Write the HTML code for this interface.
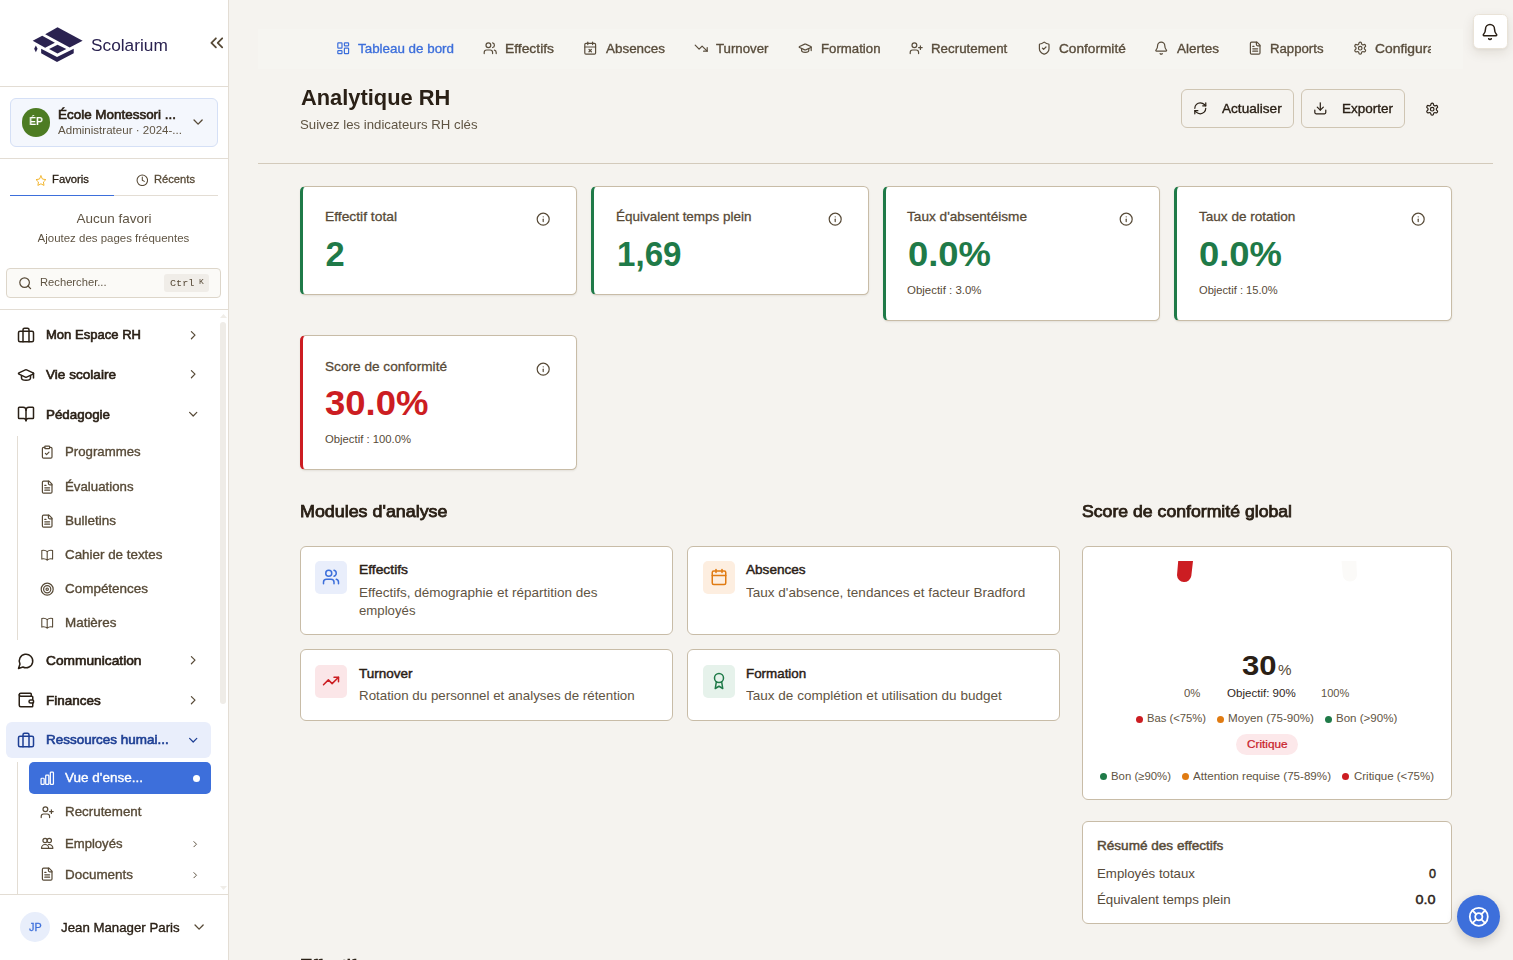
<!DOCTYPE html>
<html lang="fr"><head><meta charset="utf-8"><title>Analytique RH</title><style>
html,body{margin:0;padding:0}
body{width:1513px;height:960px;overflow:hidden;position:relative;background:#f5f3ef;font-family:"Liberation Sans", sans-serif;}
body div,body svg,body span.t{position:absolute;box-sizing:border-box}
span.t{white-space:nowrap;transform-origin:0 0;}
span.g{will-change:transform;}
</style></head><body>
<aside>
<div style="left:0px;top:0px;width:229px;height:960px;background:#fff;border-right:1px solid #e3ddd4;"></div>
<svg style="left:20px;top:15px" width="160" height="60" viewBox="0 0 1513 567"><g fill="#2a2250"><polygon points="238,183 355,115 592,243 470,308"/><polygon points="120,243 210,197 330,262 238,310"/><polygon points="275,322 355,280 438,322 355,365"/><polygon points="200,318 350,397 508,318 508,362 350,445 200,362"/><polygon points="150,288 166,320 150,352 134,320"/></g></svg>
<span class="t g" style='left:91.00px;top:35px;font-size:16.8px;line-height:21px;font-weight:400;color:#2a2250;transform:scaleX(1.0294);'>Scolarium</span>
<svg style="left:205.70px;top:32.40px" width="21.6" height="21.6" viewBox="0 0 24 24" fill="none" stroke="#574a37" stroke-width="2" stroke-linecap="round" stroke-linejoin="round"><path d="m11 17-5-5 5-5"/><path d="m18 17-5-5 5-5"/></svg>
<div style="left:0px;top:86px;width:228px;height:1px;background:#e3ddd4;"></div>
<div style="left:10px;top:98px;width:208px;height:49px;background:#f4f7fd;border:1px solid #d5e0f6;border-radius:6px;"></div>
<div style="left:21.7px;top:108px;width:28.8px;height:28.8px;background:#4d7c23;border-radius:50%;"></div>
<span class="t g" style='left:29.03px;top:114px;font-size:10.6px;line-height:14px;font-weight:700;color:#fff;transform:scaleX(0.9618);transform-origin:50% 0;'>ÉP</span>
<span class="t g" style='left:57.70px;top:107px;font-size:12.6px;line-height:16px;font-weight:400;color:#2a2016;-webkit-text-stroke:0.58px;transform:scaleX(1.0670);'>École Montessori ...</span>
<span class="t g" style='left:57.70px;top:123px;font-size:10.8px;line-height:14px;font-weight:400;color:#5f5443;transform:scaleX(1.0706);'>Administrateur · 2024-...</span>
<svg style="left:190.10px;top:114.40px" width="16.2" height="16.2" viewBox="0 0 24 24" fill="none" stroke="#574a37" stroke-width="2" stroke-linecap="round" stroke-linejoin="round"><path d="m6 9 6 6 6-6"/></svg>
<div style="left:0px;top:158px;width:228px;height:1px;background:#e3ddd4;"></div>
<div style="left:10px;top:195px;width:208px;height:1px;background:#e3ddd4;"></div>
<div style="left:10px;top:194.5px;width:104px;height:1.5px;background:#3d6fdb;"></div>
<svg style="left:34.65px;top:174.55px" width="11.9" height="11.9" viewBox="0 0 24 24" fill="none" stroke="#f2b530" stroke-width="2" stroke-linecap="round" stroke-linejoin="round"><polygon points="12 2 15.09 8.26 22 9.27 17 14.14 18.18 21.02 12 17.77 5.82 21.02 7 14.14 2 9.27 8.91 8.26 12 2"/></svg>
<span class="t g" style='left:52.30px;top:172px;font-size:10.8px;line-height:14px;font-weight:400;color:#2a2016;-webkit-text-stroke:0.29px;transform:scaleX(1.0450);'>Favoris</span>
<svg style="left:135.90px;top:173.90px" width="12.6" height="12.6" viewBox="0 0 24 24" fill="none" stroke="#574a37" stroke-width="2" stroke-linecap="round" stroke-linejoin="round"><circle cx="12" cy="12" r="10"/><polyline points="12 6 12 12 16 14"/></svg>
<span class="t g" style='left:154.00px;top:172px;font-size:10.8px;line-height:14px;font-weight:400;color:#574a37;-webkit-text-stroke:0.29px;transform:scaleX(1.0351);'>Récents</span>
<span class="t g" style='left:78.79px;top:211px;font-size:12.6px;line-height:16px;font-weight:400;color:#5f5443;transform:scaleX(1.0712);transform-origin:50% 0;'>Aucun favori</span>
<span class="t g" style='left:42.37px;top:231px;font-size:10.8px;line-height:14px;font-weight:400;color:#5f5443;transform:scaleX(1.0619);transform-origin:50% 0;'>Ajoutez des pages fréquentes</span>
<div style="left:6px;top:268px;width:215px;height:29.5px;background:#fbfaf7;border:1px solid #ddd6ca;border-radius:4px;"></div>
<svg style="left:17.80px;top:276.00px" width="14.4" height="14.4" viewBox="0 0 24 24" fill="none" stroke="#574a37" stroke-width="2" stroke-linecap="round" stroke-linejoin="round"><circle cx="11" cy="11" r="8"/><path d="m21 21-4.3-4.3"/></svg>
<span class="t g" style='left:39.70px;top:275px;font-size:10.8px;line-height:14px;font-weight:400;color:#5f5443;transform:scaleX(1.0371);'>Rechercher...</span>
<div style="left:164px;top:274px;width:44.7px;height:17.7px;background:#f0ede8;border-radius:3px;"></div>
<span class="t g" style='left:169.50px;top:277px;font-size:9.9px;line-height:13px;font-weight:400;color:#574a37;font-family:"Liberation Mono", monospace;transform:scaleX(1.0329);'>Ctrl</span>
<span class="t g" style='left:198.70px;top:276px;font-size:8px;line-height:11px;font-weight:400;color:#574a37;font-family:"Liberation Mono", monospace;'>K</span>
<div style="left:0px;top:309px;width:228px;height:1px;background:#e3ddd4;"></div>
<div style="left:220.3px;top:321.5px;width:5.5px;height:382.5px;background:#efece7;border-radius:3px;"></div>
<svg style="left:219.5px;top:314px" width="7" height="4" viewBox="0 0 7 4"><path d="M0 4 3.5 0 7 4z" fill="#f0ede8"/></svg>
<svg style="left:219.5px;top:886px" width="7" height="4" viewBox="0 0 7 4"><path d="M0 0 3.5 4 7 0z" fill="#f0ede8"/></svg>
<svg style="left:17.00px;top:325.80px" width="18" height="18" viewBox="0 0 24 24" fill="none" stroke="#2a2016" stroke-width="2" stroke-linecap="round" stroke-linejoin="round"><rect width="20" height="14" x="2" y="7" rx="2" ry="2"/><path d="M16 21V5a2 2 0 0 0-2-2h-4a2 2 0 0 0-2 2v16"/></svg>
<span class="t g" style='left:46.00px;top:327px;font-size:12.6px;line-height:16px;font-weight:400;color:#2a2016;-webkit-text-stroke:0.58px;transform:scaleX(1.0360);'>Mon Espace RH</span>
<svg style="left:185.80px;top:327.60px" width="14.4" height="14.4" viewBox="0 0 24 24" fill="none" stroke="#574a37" stroke-width="2" stroke-linecap="round" stroke-linejoin="round"><path d="m9 18 6-6-6-6"/></svg>
<svg style="left:17.00px;top:365.60px" width="18" height="18" viewBox="0 0 24 24" fill="none" stroke="#2a2016" stroke-width="2" stroke-linecap="round" stroke-linejoin="round"><path d="M21.42 10.922a1 1 0 0 0-.019-1.838L12.83 5.18a2 2 0 0 0-1.66 0L2.6 9.08a1 1 0 0 0 0 1.832l8.57 3.908a2 2 0 0 0 1.66 0z"/><path d="M22 10v6"/><path d="M6 12.5V16a6 3 0 0 0 12 0v-3.5"/></svg>
<span class="t g" style='left:46.00px;top:367px;font-size:12.6px;line-height:16px;font-weight:400;color:#2a2016;-webkit-text-stroke:0.58px;transform:scaleX(1.0790);'>Vie scolaire</span>
<svg style="left:185.80px;top:367.40px" width="14.4" height="14.4" viewBox="0 0 24 24" fill="none" stroke="#574a37" stroke-width="2" stroke-linecap="round" stroke-linejoin="round"><path d="m9 18 6-6-6-6"/></svg>
<svg style="left:17.00px;top:405.40px" width="18" height="18" viewBox="0 0 24 24" fill="none" stroke="#2a2016" stroke-width="2" stroke-linecap="round" stroke-linejoin="round"><path d="M12 7v14"/><path d="M3 18a1 1 0 0 1-1-1V4a1 1 0 0 1 1-1h5a4 4 0 0 1 4 4 4 4 0 0 1 4-4h5a1 1 0 0 1 1 1v13a1 1 0 0 1-1 1h-6a3 3 0 0 0-3 3 3 3 0 0 0-3-3z"/></svg>
<span class="t g" style='left:46.00px;top:407px;font-size:12.6px;line-height:16px;font-weight:400;color:#2a2016;-webkit-text-stroke:0.58px;transform:scaleX(1.0625);'>Pédagogie</span>
<svg style="left:185.80px;top:407.20px" width="14.4" height="14.4" viewBox="0 0 24 24" fill="none" stroke="#574a37" stroke-width="2" stroke-linecap="round" stroke-linejoin="round"><path d="m6 9 6 6 6-6"/></svg>
<div style="left:17px;top:436px;width:1px;height:204px;background:#e3ddd4;"></div>
<svg style="left:40.00px;top:445.00px" width="14.4" height="14.4" viewBox="0 0 24 24" fill="none" stroke="#574a37" stroke-width="2" stroke-linecap="round" stroke-linejoin="round"><rect width="8" height="4" x="8" y="2" rx="1" ry="1"/><path d="M16 4h2a2 2 0 0 1 2 2v14a2 2 0 0 1-2 2H6a2 2 0 0 1-2-2V6a2 2 0 0 1 2-2h2"/><path d="m9 14 2 2 4-4"/></svg>
<span class="t g" style='left:65.30px;top:444px;font-size:12.6px;line-height:16px;font-weight:400;color:#574a37;-webkit-text-stroke:0.34px;transform:scaleX(1.0500);'>Programmes</span>
<svg style="left:40.00px;top:479.70px" width="14.4" height="14.4" viewBox="0 0 24 24" fill="none" stroke="#574a37" stroke-width="2" stroke-linecap="round" stroke-linejoin="round"><path d="M15 2H6a2 2 0 0 0-2 2v16a2 2 0 0 0 2 2h12a2 2 0 0 0 2-2V7Z"/><path d="M14 2v4a2 2 0 0 0 2 2h4"/><path d="M10 9H8"/><path d="M16 13H8"/><path d="M16 17H8"/></svg>
<span class="t g" style='left:65.30px;top:479px;font-size:12.6px;line-height:16px;font-weight:400;color:#574a37;-webkit-text-stroke:0.34px;transform:scaleX(1.0521);'>Évaluations</span>
<svg style="left:40.00px;top:513.70px" width="14.4" height="14.4" viewBox="0 0 24 24" fill="none" stroke="#574a37" stroke-width="2" stroke-linecap="round" stroke-linejoin="round"><path d="M15 2H6a2 2 0 0 0-2 2v16a2 2 0 0 0 2 2h12a2 2 0 0 0 2-2V7Z"/><path d="M14 2v4a2 2 0 0 0 2 2h4"/><path d="M10 9H8"/><path d="M16 13H8"/><path d="M16 17H8"/></svg>
<span class="t g" style='left:65.30px;top:513px;font-size:12.6px;line-height:16px;font-weight:400;color:#574a37;-webkit-text-stroke:0.34px;transform:scaleX(1.0712);'>Bulletins</span>
<svg style="left:40.00px;top:547.70px" width="14.4" height="14.4" viewBox="0 0 24 24" fill="none" stroke="#574a37" stroke-width="2" stroke-linecap="round" stroke-linejoin="round"><path stroke-width="1.8" d="M12 6.042A8.967 8.967 0 0 0 6 3.75c-1.052 0-2.062.18-3 .512v14.25A8.987 8.987 0 0 1 6 18c2.305 0 4.408.867 6 2.292m0-14.25a8.966 8.966 0 0 1 6-2.292c1.052 0 2.062.18 3 .512v14.25A8.987 8.987 0 0 0 18 18a8.967 8.967 0 0 0-6 2.292m0-14.25v14.25"/></svg>
<span class="t g" style='left:65.30px;top:547px;font-size:12.6px;line-height:16px;font-weight:400;color:#574a37;-webkit-text-stroke:0.34px;transform:scaleX(1.0630);'>Cahier de textes</span>
<svg style="left:40.00px;top:581.70px" width="14.4" height="14.4" viewBox="0 0 24 24" fill="none" stroke="#574a37" stroke-width="2" stroke-linecap="round" stroke-linejoin="round"><circle cx="12" cy="12" r="10"/><circle cx="12" cy="12" r="6"/><circle cx="12" cy="12" r="2"/></svg>
<span class="t g" style='left:65.30px;top:581px;font-size:12.6px;line-height:16px;font-weight:400;color:#574a37;-webkit-text-stroke:0.34px;transform:scaleX(1.0682);'>Compétences</span>
<svg style="left:40.00px;top:615.70px" width="14.4" height="14.4" viewBox="0 0 24 24" fill="none" stroke="#574a37" stroke-width="2" stroke-linecap="round" stroke-linejoin="round"><path stroke-width="1.8" d="M12 6.042A8.967 8.967 0 0 0 6 3.75c-1.052 0-2.062.18-3 .512v14.25A8.987 8.987 0 0 1 6 18c2.305 0 4.408.867 6 2.292m0-14.25a8.966 8.966 0 0 1 6-2.292c1.052 0 2.062.18 3 .512v14.25A8.987 8.987 0 0 0 18 18a8.967 8.967 0 0 0-6 2.292m0-14.25v14.25"/></svg>
<span class="t g" style='left:65.30px;top:615px;font-size:12.6px;line-height:16px;font-weight:400;color:#574a37;-webkit-text-stroke:0.34px;transform:scaleX(1.0663);'>Matières</span>
<svg style="left:17.00px;top:651.60px" width="18" height="18" viewBox="0 0 24 24" fill="none" stroke="#2a2016" stroke-width="2" stroke-linecap="round" stroke-linejoin="round"><path d="M7.9 20A9 9 0 1 0 4 16.1L2 22Z"/></svg>
<span class="t g" style='left:46.00px;top:653px;font-size:12.6px;line-height:16px;font-weight:400;color:#2a2016;-webkit-text-stroke:0.58px;transform:scaleX(1.0914);'>Communication</span>
<svg style="left:185.80px;top:653.40px" width="14.4" height="14.4" viewBox="0 0 24 24" fill="none" stroke="#574a37" stroke-width="2" stroke-linecap="round" stroke-linejoin="round"><path d="m9 18 6-6-6-6"/></svg>
<svg style="left:17.00px;top:691.30px" width="18" height="18" viewBox="0 0 24 24" fill="none" stroke="#2a2016" stroke-width="2" stroke-linecap="round" stroke-linejoin="round"><path d="M19 7V4a1 1 0 0 0-1-1H5a2 2 0 0 0 0 4h15a1 1 0 0 1 1 1v4h-3a2 2 0 0 0 0 4h3a1 1 0 0 0 1-1v-2a1 1 0 0 0-1-1"/><path d="M3 5v14a2 2 0 0 0 2 2h15a1 1 0 0 0 1-1v-4"/></svg>
<span class="t g" style='left:46.00px;top:693px;font-size:12.6px;line-height:16px;font-weight:400;color:#2a2016;-webkit-text-stroke:0.58px;transform:scaleX(1.0703);'>Finances</span>
<svg style="left:185.80px;top:693.10px" width="14.4" height="14.4" viewBox="0 0 24 24" fill="none" stroke="#574a37" stroke-width="2" stroke-linecap="round" stroke-linejoin="round"><path d="m9 18 6-6-6-6"/></svg>
<div style="left:6px;top:722px;width:205px;height:36px;background:#e9eefb;border-radius:6px;"></div>
<svg style="left:17.00px;top:730.80px" width="18" height="18" viewBox="0 0 24 24" fill="none" stroke="#1e3f94" stroke-width="2" stroke-linecap="round" stroke-linejoin="round"><rect width="20" height="14" x="2" y="7" rx="2" ry="2"/><path d="M16 21V5a2 2 0 0 0-2-2h-4a2 2 0 0 0-2 2v16"/></svg>
<span class="t g" style='left:46.00px;top:732px;font-size:12.6px;line-height:16px;font-weight:400;color:#1e3f94;-webkit-text-stroke:0.58px;transform:scaleX(1.0688);'>Ressources humai...</span>
<svg style="left:185.80px;top:732.60px" width="14.4" height="14.4" viewBox="0 0 24 24" fill="none" stroke="#1e3f94" stroke-width="2" stroke-linecap="round" stroke-linejoin="round"><path d="m6 9 6 6 6-6"/></svg>
<div style="left:17px;top:762px;width:1px;height:132px;background:#e3ddd4;"></div>
<div style="left:29px;top:762px;width:182px;height:31.7px;background:#3d6fdb;border-radius:5px;"></div>
<svg style="left:39.05px;top:769.95px" width="16.5" height="16.5" viewBox="0 0 24 24" fill="none" stroke="#fff" stroke-width="1.8" stroke-linecap="round" stroke-linejoin="round"><path d="M3 13.125C3 12.504 3.504 12 4.125 12h2.25c.621 0 1.125.504 1.125 1.125v6.75C7.5 20.496 6.996 21 6.375 21h-2.25A1.125 1.125 0 0 1 3 19.875v-6.75ZM9.75 8.625c0-.621.504-1.125 1.125-1.125h2.25c.621 0 1.125.504 1.125 1.125v11.25c0 .621-.504 1.125-1.125 1.125h-2.25a1.125 1.125 0 0 1-1.125-1.125V8.625ZM16.5 4.125c0-.621.504-1.125 1.125-1.125h2.25C20.496 3 21 3.504 21 4.125v15.75c0 .621-.504 1.125-1.125 1.125h-2.25a1.125 1.125 0 0 1-1.125-1.125V4.125Z"/></svg>
<span class="t g" style='left:65.30px;top:770px;font-size:12.6px;line-height:16px;font-weight:400;color:#fff;-webkit-text-stroke:0.34px;transform:scaleX(1.0735);'>Vue d&#x27;ense...</span>
<div style="left:192.8px;top:774.5px;width:7px;height:7px;background:#fff;border-radius:50%;"></div>
<svg style="left:40.00px;top:804.50px" width="14.4" height="14.4" viewBox="0 0 24 24" fill="none" stroke="#574a37" stroke-width="2" stroke-linecap="round" stroke-linejoin="round"><path d="M16 21v-2a4 4 0 0 0-4-4H6a4 4 0 0 0-4 4v2"/><circle cx="9" cy="7" r="4"/><line x1="19" x2="19" y1="8" y2="14"/><line x1="22" x2="16" y1="11" y2="11"/></svg>
<span class="t g" style='left:65.30px;top:804px;font-size:12.6px;line-height:16px;font-weight:400;color:#574a37;-webkit-text-stroke:0.34px;transform:scaleX(1.0609);'>Recrutement</span>
<svg style="left:40.00px;top:836.20px" width="14.4" height="14.4" viewBox="0 0 24 24" fill="none" stroke="#574a37" stroke-width="2" stroke-linecap="round" stroke-linejoin="round"><circle cx="8.5" cy="7.5" r="3.6"/><circle cx="15.5" cy="7.5" r="3.6"/><path d="M2.5 20.5a6 6.3 0 0 1 12 0z"/><path d="M14.3 14.3a6 6.3 0 0 1 7.2 6.2h-6"/></svg>
<span class="t g" style='left:65.30px;top:836px;font-size:12.6px;line-height:16px;font-weight:400;color:#574a37;-webkit-text-stroke:0.34px;transform:scaleX(1.0398);'>Employés</span>
<svg style="left:190.00px;top:838.70px" width="10.4" height="10.4" viewBox="0 0 24 24" fill="none" stroke="#5f5443" stroke-width="2.3" stroke-linecap="round" stroke-linejoin="round"><path d="m9 18 6-6-6-6"/></svg>
<svg style="left:40.00px;top:867.40px" width="14.4" height="14.4" viewBox="0 0 24 24" fill="none" stroke="#574a37" stroke-width="2" stroke-linecap="round" stroke-linejoin="round"><path d="M15 2H6a2 2 0 0 0-2 2v16a2 2 0 0 0 2 2h12a2 2 0 0 0 2-2V7Z"/><path d="M14 2v4a2 2 0 0 0 2 2h4"/><path d="M10 9H8"/><path d="M16 13H8"/><path d="M16 17H8"/></svg>
<span class="t g" style='left:65.30px;top:867px;font-size:12.6px;line-height:16px;font-weight:400;color:#574a37;-webkit-text-stroke:0.34px;transform:scaleX(1.0675);'>Documents</span>
<svg style="left:190.00px;top:869.90px" width="10.4" height="10.4" viewBox="0 0 24 24" fill="none" stroke="#5f5443" stroke-width="2.3" stroke-linecap="round" stroke-linejoin="round"><path d="m9 18 6-6-6-6"/></svg>
<div style="left:0px;top:894px;width:229px;height:66px;background:#fff;border-top:1px solid #e3ddd4;border-right:1px solid #e3ddd4;"></div>
<div style="left:20px;top:912.3px;width:30px;height:30px;background:#e8eefb;border-radius:50%;"></div>
<span class="t g" style='left:28.70px;top:920px;font-size:10.8px;line-height:14px;font-weight:400;color:#3d6fdb;-webkit-text-stroke:0.29px;transform:scaleX(0.9913);transform-origin:50% 0;'>JP</span>
<span class="t g" style='left:61.00px;top:920px;font-size:12.6px;line-height:16px;font-weight:400;color:#2a2016;-webkit-text-stroke:0.34px;transform:scaleX(1.0531);'>Jean Manager Paris</span>
<svg style="left:190.90px;top:919.40px" width="16.2" height="16.2" viewBox="0 0 24 24" fill="none" stroke="#574a37" stroke-width="2" stroke-linecap="round" stroke-linejoin="round"><path d="m6 9 6 6 6-6"/></svg>
</aside>
<main>
<header>
<div style="left:258px;top:29px;width:1205px;height:40px;background:#f6f5f1;"></div>
<svg style="left:336.10px;top:40.80px" width="14.4" height="14.4" viewBox="0 0 24 24" fill="none" stroke="#3d6fdb" stroke-width="2" stroke-linecap="round" stroke-linejoin="round"><rect width="7" height="9" x="3" y="3" rx="1"/><rect width="7" height="5" x="14" y="3" rx="1"/><rect width="7" height="9" x="14" y="12" rx="1"/><rect width="7" height="5" x="3" y="16" rx="1"/></svg>
<span class="t g" style='left:358.00px;top:41px;font-size:12.6px;line-height:16px;font-weight:400;color:#3d6fdb;-webkit-text-stroke:0.34px;transform:scaleX(1.0628);'>Tableau de bord</span>
<svg style="left:483.10px;top:40.80px" width="14.4" height="14.4" viewBox="0 0 24 24" fill="none" stroke="#594d3c" stroke-width="2" stroke-linecap="round" stroke-linejoin="round"><path d="M16 21v-2a4 4 0 0 0-4-4H6a4 4 0 0 0-4 4v2"/><circle cx="9" cy="7" r="4"/><path d="M22 21v-2a4 4 0 0 0-3-3.87"/><path d="M16 3.13a4 4 0 0 1 0 7.75"/></svg>
<span class="t g" style='left:505.00px;top:41px;font-size:12.6px;line-height:16px;font-weight:400;color:#594d3c;-webkit-text-stroke:0.34px;transform:scaleX(1.0992);'>Effectifs</span>
<svg style="left:583.10px;top:40.80px" width="14.4" height="14.4" viewBox="0 0 24 24" fill="none" stroke="#594d3c" stroke-width="2" stroke-linecap="round" stroke-linejoin="round"><path d="M8 2v4"/><path d="M16 2v4"/><rect width="18" height="18" x="3" y="4" rx="2"/><path d="M3 10h18"/><path d="m14 14-4 4"/><path d="m10 14 4 4"/></svg>
<span class="t g" style='left:605.50px;top:41px;font-size:12.6px;line-height:16px;font-weight:400;color:#594d3c;-webkit-text-stroke:0.34px;transform:scaleX(1.0667);'>Absences</span>
<svg style="left:694.40px;top:40.80px" width="14.4" height="14.4" viewBox="0 0 24 24" fill="none" stroke="#594d3c" stroke-width="2" stroke-linecap="round" stroke-linejoin="round"><polyline points="22 17 13.5 8.5 8.5 13.5 2 7"/><polyline points="16 17 22 17 22 11"/></svg>
<span class="t g" style='left:716.20px;top:41px;font-size:12.6px;line-height:16px;font-weight:400;color:#594d3c;-webkit-text-stroke:0.34px;transform:scaleX(1.0513);'>Turnover</span>
<svg style="left:798.10px;top:40.80px" width="14.4" height="14.4" viewBox="0 0 24 24" fill="none" stroke="#594d3c" stroke-width="2" stroke-linecap="round" stroke-linejoin="round"><path d="M21.42 10.922a1 1 0 0 0-.019-1.838L12.83 5.18a2 2 0 0 0-1.66 0L2.6 9.08a1 1 0 0 0 0 1.832l8.57 3.908a2 2 0 0 0 1.66 0z"/><path d="M22 10v6"/><path d="M6 12.5V16a6 3 0 0 0 12 0v-3.5"/></svg>
<span class="t g" style='left:820.50px;top:41px;font-size:12.6px;line-height:16px;font-weight:400;color:#594d3c;-webkit-text-stroke:0.34px;transform:scaleX(1.0493);'>Formation</span>
<svg style="left:909.10px;top:40.80px" width="14.4" height="14.4" viewBox="0 0 24 24" fill="none" stroke="#594d3c" stroke-width="2" stroke-linecap="round" stroke-linejoin="round"><path d="M16 21v-2a4 4 0 0 0-4-4H6a4 4 0 0 0-4 4v2"/><circle cx="9" cy="7" r="4"/><line x1="19" x2="19" y1="8" y2="14"/><line x1="22" x2="16" y1="11" y2="11"/></svg>
<span class="t g" style='left:931.20px;top:41px;font-size:12.6px;line-height:16px;font-weight:400;color:#594d3c;-webkit-text-stroke:0.34px;transform:scaleX(1.0581);'>Recrutement</span>
<svg style="left:1037.10px;top:40.80px" width="14.4" height="14.4" viewBox="0 0 24 24" fill="none" stroke="#594d3c" stroke-width="2" stroke-linecap="round" stroke-linejoin="round"><path d="M20 13c0 5-3.5 7.5-7.66 8.95a1 1 0 0 1-.67-.01C7.5 20.5 4 18 4 13V6a1 1 0 0 1 1-1c2 0 4.5-1.2 6.24-2.72a1.17 1.17 0 0 1 1.52 0C14.51 3.81 17 5 19 5a1 1 0 0 1 1 1z"/><path d="m9 12 2 2 4-4"/></svg>
<span class="t g" style='left:1058.70px;top:41px;font-size:12.6px;line-height:16px;font-weight:400;color:#594d3c;-webkit-text-stroke:0.34px;transform:scaleX(1.0845);'>Conformité</span>
<svg style="left:1154.10px;top:40.80px" width="14.4" height="14.4" viewBox="0 0 24 24" fill="none" stroke="#594d3c" stroke-width="2" stroke-linecap="round" stroke-linejoin="round"><path d="M10.268 21a2 2 0 0 0 3.464 0"/><path d="M3.262 15.326A1 1 0 0 0 4 17h16a1 1 0 0 0 .74-1.673C19.41 13.956 18 12.499 18 8A6 6 0 0 0 6 8c0 4.499-1.411 5.956-2.738 7.326"/></svg>
<span class="t g" style='left:1176.70px;top:41px;font-size:12.6px;line-height:16px;font-weight:400;color:#594d3c;-webkit-text-stroke:0.34px;transform:scaleX(1.0713);'>Alertes</span>
<svg style="left:1248.10px;top:40.80px" width="14.4" height="14.4" viewBox="0 0 24 24" fill="none" stroke="#594d3c" stroke-width="2" stroke-linecap="round" stroke-linejoin="round"><path d="M15 2H6a2 2 0 0 0-2 2v16a2 2 0 0 0 2 2h12a2 2 0 0 0 2-2V7Z"/><path d="M14 2v4a2 2 0 0 0 2 2h4"/><path d="M10 9H8"/><path d="M16 13H8"/><path d="M16 17H8"/></svg>
<span class="t g" style='left:1269.50px;top:41px;font-size:12.6px;line-height:16px;font-weight:400;color:#594d3c;-webkit-text-stroke:0.34px;transform:scaleX(1.0468);'>Rapports</span>
<svg style="left:1352.70px;top:40.80px" width="14.4" height="14.4" viewBox="0 0 24 24" fill="none" stroke="#594d3c" stroke-width="2" stroke-linecap="round" stroke-linejoin="round"><path d="M12.22 2h-.44a2 2 0 0 0-2 2v.18a2 2 0 0 1-1 1.73l-.43.25a2 2 0 0 1-2 0l-.15-.08a2 2 0 0 0-2.73.73l-.22.38a2 2 0 0 0 .73 2.73l.15.1a2 2 0 0 1 1 1.72v.51a2 2 0 0 1-1 1.74l-.15.09a2 2 0 0 0-.73 2.73l.22.38a2 2 0 0 0 2.73.73l.15-.08a2 2 0 0 1 2 0l.43.25a2 2 0 0 1 1 1.73V20a2 2 0 0 0 2 2h.44a2 2 0 0 0 2-2v-.18a2 2 0 0 1 1-1.73l.43-.25a2 2 0 0 1 2 0l.15.08a2 2 0 0 0 2.73-.73l.22-.39a2 2 0 0 0-.73-2.73l-.15-.08a2 2 0 0 1-1-1.74v-.5a2 2 0 0 1 1-1.74l.15-.09a2 2 0 0 0 .73-2.73l-.22-.38a2 2 0 0 0-2.73-.73l-.15.08a2 2 0 0 1-2 0l-.43-.25a2 2 0 0 1-1-1.73V4a2 2 0 0 0-2-2z"/><circle cx="12" cy="12" r="3"/></svg>
<span class="t g" style='left:1375.00px;top:41px;font-size:12.6px;line-height:16px;font-weight:400;color:#594d3c;-webkit-text-stroke:0.34px;transform:scaleX(1.0998);'>Configuration</span>
<div style="left:1430.5px;top:29px;width:62.5px;height:40px;background:#f5f3ef;"></div>
<div style="left:1430.5px;top:29px;width:32.5px;height:40px;background:#f6f5f1;"></div>
<div style="left:1473px;top:14px;width:35px;height:34.6px;background:#fff;border:1px solid #e9e3d8;border-radius:5.5px;box-shadow:0 4px 12px rgba(60,40,10,.10),0 1px 3px rgba(60,40,10,.05);"></div>
<svg style="left:1481.20px;top:22.90px" width="18" height="18" viewBox="0 0 24 24" fill="none" stroke="#2a2016" stroke-width="2" stroke-linecap="round" stroke-linejoin="round"><path d="M10.268 21a2 2 0 0 0 3.464 0"/><path d="M3.262 15.326A1 1 0 0 0 4 17h16a1 1 0 0 0 .74-1.673C19.41 13.956 18 12.499 18 8A6 6 0 0 0 6 8c0 4.499-1.411 5.956-2.738 7.326"/></svg>
<span class="t g" style='left:300.50px;top:84px;font-size:21.6px;line-height:27px;font-weight:700;color:#2a2016;transform:scaleX(1.0117);'>Analytique RH</span>
<span class="t g" style='left:300.00px;top:117px;font-size:12.6px;line-height:16px;font-weight:400;color:#5f5443;transform:scaleX(1.0479);'>Suivez les indicateurs RH clés</span>
<div style="left:1181.2px;top:89px;width:112.5px;height:38.8px;border:1px solid #cfc5b3;border-radius:6px;"></div>
<svg style="left:1193.10px;top:101.40px" width="14.6" height="14.6" viewBox="0 0 24 24" fill="none" stroke="#2a2016" stroke-width="2" stroke-linecap="round" stroke-linejoin="round"><path d="M3 12a9 9 0 0 1 9-9 9.75 9.75 0 0 1 6.74 2.74L21 8"/><path d="M21 3v5h-5"/><path d="M21 12a9 9 0 0 1-9 9 9.75 9.75 0 0 1-6.74-2.74L3 16"/><path d="M8 16H3v5"/></svg>
<span class="t g" style='left:1222.00px;top:101px;font-size:12.6px;line-height:16px;font-weight:400;color:#2a2016;-webkit-text-stroke:0.34px;transform:scaleX(1.0796);'>Actualiser</span>
<div style="left:1301.2px;top:89px;width:103.8px;height:38.8px;border:1px solid #cfc5b3;border-radius:6px;"></div>
<svg style="left:1313.10px;top:101.40px" width="14.6" height="14.6" viewBox="0 0 24 24" fill="none" stroke="#2a2016" stroke-width="2" stroke-linecap="round" stroke-linejoin="round"><path d="M21 15v4a2 2 0 0 1-2 2H5a2 2 0 0 1-2-2v-4"/><polyline points="7 10 12 15 17 10"/><line x1="12" x2="12" y1="15" y2="3"/></svg>
<span class="t g" style='left:1342.00px;top:101px;font-size:12.6px;line-height:16px;font-weight:400;color:#2a2016;-webkit-text-stroke:0.34px;transform:scaleX(1.0712);'>Exporter</span>
<svg style="left:1425.30px;top:102.00px" width="14.4" height="14.4" viewBox="0 0 24 24" fill="none" stroke="#2a2016" stroke-width="2" stroke-linecap="round" stroke-linejoin="round"><path d="M12.22 2h-.44a2 2 0 0 0-2 2v.18a2 2 0 0 1-1 1.73l-.43.25a2 2 0 0 1-2 0l-.15-.08a2 2 0 0 0-2.73.73l-.22.38a2 2 0 0 0 .73 2.73l.15.1a2 2 0 0 1 1 1.72v.51a2 2 0 0 1-1 1.74l-.15.09a2 2 0 0 0-.73 2.73l.22.38a2 2 0 0 0 2.73.73l.15-.08a2 2 0 0 1 2 0l.43.25a2 2 0 0 1 1 1.73V20a2 2 0 0 0 2 2h.44a2 2 0 0 0 2-2v-.18a2 2 0 0 1 1-1.73l.43-.25a2 2 0 0 1 2 0l.15.08a2 2 0 0 0 2.73-.73l.22-.39a2 2 0 0 0-.73-2.73l-.15-.08a2 2 0 0 1-1-1.74v-.5a2 2 0 0 1 1-1.74l.15-.09a2 2 0 0 0 .73-2.73l-.22-.38a2 2 0 0 0-2.73-.73l-.15.08a2 2 0 0 1-2 0l-.43-.25a2 2 0 0 1-1-1.73V4a2 2 0 0 0-2-2z"/><circle cx="12" cy="12" r="3"/></svg>
<div style="left:258px;top:163px;width:1235px;height:1px;background:#d3cabb;"></div>
</header>
<section>
<div style="left:300px;top:186px;width:277.3px;height:109px;background:#fff;border:1px solid #c8bca7;border-left:3.4px solid #1f7a48;border-radius:5.5px;box-shadow:0 1px 2px rgba(60,40,10,.09);"></div>
<span class="t" style='left:324.50px;top:209px;font-size:12.6px;line-height:16px;font-weight:400;color:#574a37;-webkit-text-stroke:0.26px;transform:scaleX(1.0979);'>Effectif total</span>
<svg style="left:536.30px;top:211.80px" width="14.4" height="14.4" viewBox="0 0 24 24" fill="none" stroke="#574a37" stroke-width="2" stroke-linecap="round" stroke-linejoin="round"><circle cx="12" cy="12" r="10"/><path d="M12 16v-4"/><path d="M12 8h.01"/></svg>
<span class="t" style='left:325.50px;top:234px;font-size:34.5px;line-height:40px;font-weight:700;color:#1f7a48;'>2</span>
<div style="left:591.3px;top:186px;width:277.3px;height:109px;background:#fff;border:1px solid #c8bca7;border-left:3.4px solid #1f7a48;border-radius:5.5px;box-shadow:0 1px 2px rgba(60,40,10,.09);"></div>
<span class="t" style='left:615.80px;top:209px;font-size:12.6px;line-height:16px;font-weight:400;color:#574a37;-webkit-text-stroke:0.26px;transform:scaleX(1.0693);'>Équivalent temps plein</span>
<svg style="left:827.60px;top:211.80px" width="14.4" height="14.4" viewBox="0 0 24 24" fill="none" stroke="#574a37" stroke-width="2" stroke-linecap="round" stroke-linejoin="round"><circle cx="12" cy="12" r="10"/><path d="M12 16v-4"/><path d="M12 8h.01"/></svg>
<span class="t" style='left:616.80px;top:234px;font-size:34.5px;line-height:40px;font-weight:700;color:#1f7a48;transform:scaleX(0.9604);'>1,69</span>
<div style="left:882.7px;top:186px;width:277.3px;height:135px;background:#fff;border:1px solid #c8bca7;border-left:3.4px solid #1f7a48;border-radius:5.5px;box-shadow:0 1px 2px rgba(60,40,10,.09);"></div>
<span class="t" style='left:907.20px;top:209px;font-size:12.6px;line-height:16px;font-weight:400;color:#574a37;-webkit-text-stroke:0.26px;transform:scaleX(1.0818);'>Taux d&#x27;absentéisme</span>
<svg style="left:1119.00px;top:211.80px" width="14.4" height="14.4" viewBox="0 0 24 24" fill="none" stroke="#574a37" stroke-width="2" stroke-linecap="round" stroke-linejoin="round"><circle cx="12" cy="12" r="10"/><path d="M12 16v-4"/><path d="M12 8h.01"/></svg>
<span class="t" style='left:907.50px;top:234px;font-size:34.5px;line-height:40px;font-weight:700;color:#1f7a48;transform:scaleX(1.0554);'>0.0%</span>
<span class="t" style='left:907.20px;top:283px;font-size:10.8px;line-height:14px;font-weight:400;color:#574a37;transform:scaleX(1.0610);'>Objectif : 3.0%</span>
<div style="left:1174.2px;top:186px;width:277.7px;height:135px;background:#fff;border:1px solid #c8bca7;border-left:3.4px solid #1f7a48;border-radius:5.5px;box-shadow:0 1px 2px rgba(60,40,10,.09);"></div>
<span class="t" style='left:1198.70px;top:209px;font-size:12.6px;line-height:16px;font-weight:400;color:#574a37;-webkit-text-stroke:0.26px;transform:scaleX(1.0756);'>Taux de rotation</span>
<svg style="left:1410.50px;top:211.80px" width="14.4" height="14.4" viewBox="0 0 24 24" fill="none" stroke="#574a37" stroke-width="2" stroke-linecap="round" stroke-linejoin="round"><circle cx="12" cy="12" r="10"/><path d="M12 16v-4"/><path d="M12 8h.01"/></svg>
<span class="t" style='left:1199.00px;top:234px;font-size:34.5px;line-height:40px;font-weight:700;color:#1f7a48;transform:scaleX(1.0554);'>0.0%</span>
<span class="t" style='left:1198.70px;top:283px;font-size:10.8px;line-height:14px;font-weight:400;color:#574a37;transform:scaleX(1.0326);'>Objectif : 15.0%</span>
<div style="left:300px;top:335px;width:277.3px;height:135px;background:#fff;border:1px solid #c8bca7;border-left:3.4px solid #cc1d22;border-radius:5.5px;box-shadow:0 1px 2px rgba(60,40,10,.09);"></div>
<span class="t" style='left:324.50px;top:359px;font-size:12.6px;line-height:16px;font-weight:400;color:#574a37;-webkit-text-stroke:0.26px;transform:scaleX(1.0825);'>Score de conformité</span>
<svg style="left:536.30px;top:361.80px" width="14.4" height="14.4" viewBox="0 0 24 24" fill="none" stroke="#574a37" stroke-width="2" stroke-linecap="round" stroke-linejoin="round"><circle cx="12" cy="12" r="10"/><path d="M12 16v-4"/><path d="M12 8h.01"/></svg>
<span class="t" style='left:324.80px;top:383px;font-size:34.5px;line-height:40px;font-weight:700;color:#cc1d22;transform:scaleX(1.0580);'>30.0%</span>
<span class="t" style='left:324.50px;top:432px;font-size:10.8px;line-height:14px;font-weight:400;color:#574a37;transform:scaleX(1.0458);'>Objectif : 100.0%</span>
</section>
<section>
<span class="t g" style='left:300.00px;top:501px;font-size:16.2px;line-height:20px;font-weight:400;color:#2a2016;-webkit-text-stroke:0.75px;transform:scaleX(1.1042);'>Modules d&#x27;analyse</span>
<span class="t g" style='left:1082.30px;top:501px;font-size:16.2px;line-height:20px;font-weight:400;color:#2a2016;-webkit-text-stroke:0.75px;transform:scaleX(1.0906);'>Score de conformité global</span>
<div style="left:300px;top:546px;width:373px;height:89px;background:#fff;border:1px solid #c8bca7;border-radius:6px;"></div>
<div style="left:315px;top:561.2px;width:32px;height:32.5px;background:#e9eefb;border-radius:5px;"></div>
<svg style="left:322.00px;top:568.40px" width="18" height="18" viewBox="0 0 24 24" fill="none" stroke="#3d6fdb" stroke-width="2" stroke-linecap="round" stroke-linejoin="round"><path d="M16 21v-2a4 4 0 0 0-4-4H6a4 4 0 0 0-4 4v2"/><circle cx="9" cy="7" r="4"/><path d="M22 21v-2a4 4 0 0 0-3-3.87"/><path d="M16 3.13a4 4 0 0 1 0 7.75"/></svg>
<span class="t" style='left:358.50px;top:562px;font-size:12.6px;line-height:16px;font-weight:400;color:#2a2016;-webkit-text-stroke:0.43px;transform:scaleX(1.0992);'>Effectifs</span>
<span class="t" style='left:358.50px;top:585px;font-size:12.6px;line-height:16px;font-weight:400;color:#5f5443;transform:scaleX(1.0724);'>Effectifs, démographie et répartition des</span>
<span class="t" style='left:358.50px;top:603px;font-size:12.6px;line-height:16px;font-weight:400;color:#5f5443;transform:scaleX(1.0481);'>employés</span>
<div style="left:687.01px;top:546px;width:373px;height:89px;background:#fff;border:1px solid #c8bca7;border-radius:6px;"></div>
<div style="left:702.81px;top:561.2px;width:32px;height:32.5px;background:#fdeee0;border-radius:5px;"></div>
<svg style="left:709.81px;top:568.40px" width="18" height="18" viewBox="0 0 24 24" fill="none" stroke="#e07b12" stroke-width="2" stroke-linecap="round" stroke-linejoin="round"><path d="M8 2v4"/><path d="M16 2v4"/><rect width="18" height="18" x="3" y="4" rx="2"/><path d="M3 10h18"/></svg>
<span class="t" style='left:746.31px;top:562px;font-size:12.6px;line-height:16px;font-weight:400;color:#2a2016;-webkit-text-stroke:0.43px;transform:scaleX(1.0775);'>Absences</span>
<span class="t" style='left:746.31px;top:585px;font-size:12.6px;line-height:16px;font-weight:400;color:#5f5443;transform:scaleX(1.0740);'>Taux d&#x27;absence, tendances et facteur Bradford</span>
<div style="left:300px;top:649px;width:373px;height:72px;background:#fff;border:1px solid #c8bca7;border-radius:6px;"></div>
<div style="left:315px;top:665px;width:32px;height:32.5px;background:#fbe6e8;border-radius:5px;"></div>
<svg style="left:322.00px;top:672.20px" width="18" height="18" viewBox="0 0 24 24" fill="none" stroke="#cc1d22" stroke-width="2" stroke-linecap="round" stroke-linejoin="round"><polyline points="22 7 13.5 15.5 8.5 10.5 2 17"/><polyline points="16 7 22 7 22 13"/></svg>
<span class="t" style='left:358.50px;top:666px;font-size:12.6px;line-height:16px;font-weight:400;color:#2a2016;-webkit-text-stroke:0.43px;transform:scaleX(1.0713);'>Turnover</span>
<span class="t" style='left:358.50px;top:688px;font-size:12.6px;line-height:16px;font-weight:400;color:#5f5443;transform:scaleX(1.0585);'>Rotation du personnel et analyses de rétention</span>
<div style="left:687.01px;top:649px;width:373px;height:72px;background:#fff;border:1px solid #c8bca7;border-radius:6px;"></div>
<div style="left:702.81px;top:665px;width:32px;height:32.5px;background:#e6f2eb;border-radius:5px;"></div>
<svg style="left:709.81px;top:672.20px" width="18" height="18" viewBox="0 0 24 24" fill="none" stroke="#1f7a48" stroke-width="2" stroke-linecap="round" stroke-linejoin="round"><circle cx="12" cy="8" r="6"/><path d="M15.477 12.89 17 22l-5-3-5 3 1.523-9.11"/></svg>
<span class="t" style='left:746.31px;top:666px;font-size:12.6px;line-height:16px;font-weight:400;color:#2a2016;-webkit-text-stroke:0.43px;transform:scaleX(1.0617);'>Formation</span>
<span class="t" style='left:746.31px;top:688px;font-size:12.6px;line-height:16px;font-weight:400;color:#5f5443;transform:scaleX(1.0746);'>Taux de complétion et utilisation du budget</span>
<div style="left:1082px;top:546px;width:370px;height:254px;background:#fff;border:1px solid #c8bca7;border-radius:6px;"></div>
<svg style="left:1175px;top:560px" width="20" height="24" viewBox="0 0 20 24"><path d="M3.2 .9 H18 L16.3 16 A7.2 7.2 0 0 1 2 15.2 Z" fill="#cc1d22"/></svg>
<svg style="left:1340px;top:560px" width="20" height="24" viewBox="0 0 20 24"><path d="M1.5 .9 H16.3 L17 15.2 A7.2 7.2 0 0 1 2.9 16 Z" fill="#fbfaf8"/></svg>
<span class="t" style='left:1241.50px;top:649px;font-size:28px;line-height:33px;font-weight:700;color:#2a2016;transform:scaleX(1.1105);'>30</span>
<span class="t" style='left:1278.00px;top:660px;font-size:15.2px;line-height:19px;font-weight:400;color:#574a37;'>%</span>
<span class="t" style='left:1184.40px;top:686px;font-size:10.8px;line-height:14px;font-weight:400;color:#5f5443;transform:scaleX(1.0507);'>0%</span>
<span class="t" style='left:1226.70px;top:686px;font-size:10.8px;line-height:14px;font-weight:400;color:#30261b;transform:scaleX(1.0698);'>Objectif: 90%</span>
<span class="t" style='left:1320.50px;top:686px;font-size:10.8px;line-height:14px;font-weight:400;color:#5f5443;transform:scaleX(1.0244);'>100%</span>
<div style="left:1136.1px;top:715.8px;width:7px;height:7px;background:#cc1d22;border-radius:50%;"></div>
<span class="t" style='left:1146.60px;top:711px;font-size:10.8px;line-height:14px;font-weight:400;color:#5f5443;transform:scaleX(1.0402);'>Bas (&lt;75%)</span>
<div style="left:1217.0px;top:715.8px;width:7px;height:7px;background:#e07b12;border-radius:50%;"></div>
<span class="t" style='left:1228.00px;top:711px;font-size:10.8px;line-height:14px;font-weight:400;color:#5f5443;transform:scaleX(1.0775);'>Moyen (75-90%)</span>
<div style="left:1325.3px;top:715.8px;width:7px;height:7px;background:#1f7a48;border-radius:50%;"></div>
<span class="t" style='left:1336.40px;top:711px;font-size:10.8px;line-height:14px;font-weight:400;color:#5f5443;transform:scaleX(1.0693);'>Bon (&gt;90%)</span>
<div style="left:1236px;top:734.2px;width:62px;height:20.8px;background:#fce8ea;border-radius:11px;"></div>
<span class="t" style='left:1246.50px;top:737px;font-size:10.8px;line-height:14px;font-weight:400;color:#c81e2b;-webkit-text-stroke:0.23px;transform:scaleX(1.0882);'>Critique</span>
<div style="left:1100.0px;top:773.3px;width:7px;height:7px;background:#1f7a48;border-radius:50%;"></div>
<span class="t" style='left:1110.60px;top:769px;font-size:10.8px;line-height:14px;font-weight:400;color:#5f5443;transform:scaleX(1.0538);'>Bon (≥90%)</span>
<div style="left:1182.0px;top:773.3px;width:7px;height:7px;background:#e07b12;border-radius:50%;"></div>
<span class="t" style='left:1193.00px;top:769px;font-size:10.8px;line-height:14px;font-weight:400;color:#5f5443;transform:scaleX(1.0745);'>Attention requise (75-89%)</span>
<div style="left:1342.3px;top:773.3px;width:7px;height:7px;background:#cc1d22;border-radius:50%;"></div>
<span class="t" style='left:1353.50px;top:769px;font-size:10.8px;line-height:14px;font-weight:400;color:#5f5443;transform:scaleX(1.0622);'>Critique (&lt;75%)</span>
<div style="left:1082px;top:821px;width:370px;height:103px;background:#fff;border:1px solid #c8bca7;border-radius:6px;"></div>
<span class="t" style='left:1097.40px;top:838px;font-size:12.6px;line-height:16px;font-weight:400;color:#574a37;-webkit-text-stroke:0.43px;transform:scaleX(1.0769);'>Résumé des effectifs</span>
<span class="t" style='left:1097.40px;top:866px;font-size:12.6px;line-height:16px;font-weight:400;color:#574b3a;transform:scaleX(1.0525);'>Employés totaux</span>
<span class="t" style='left:1428.98px;top:866px;font-size:12.6px;line-height:16px;font-weight:400;color:#2a2016;-webkit-text-stroke:0.43px;'>0</span>
<span class="t" style='left:1097.40px;top:892px;font-size:12.6px;line-height:16px;font-weight:400;color:#574b3a;transform:scaleX(1.0543);'>Équivalent temps plein</span>
<span class="t" style='left:1418.48px;top:892px;font-size:12.6px;line-height:16px;font-weight:400;color:#2a2016;-webkit-text-stroke:0.43px;transform:scaleX(1.1418);transform-origin:100% 0;'>0.0</span>
</section>
<div style="left:1457px;top:895px;width:43px;height:43px;background:#3d6fdb;border-radius:50%;box-shadow:0 4px 11px rgba(50,40,30,.20);"></div>
<svg style="left:1467.70px;top:905.70px" width="21.6" height="21.6" viewBox="0 0 24 24" fill="none" stroke="#fff" stroke-width="2" stroke-linecap="round" stroke-linejoin="round"><circle cx="12" cy="12" r="10"/><path d="m4.93 4.93 4.24 4.24"/><path d="m14.83 9.17 4.24-4.24"/><path d="m14.83 14.83 4.24 4.24"/><path d="m9.17 14.83-4.24 4.24"/><circle cx="12" cy="12" r="4"/></svg>
<span class="t g" style='left:300.00px;top:955px;font-size:16.2px;line-height:20px;font-weight:400;color:#2a2016;-webkit-text-stroke:0.75px;transform:scaleX(1.1382);'>Effectifs</span>
</main>
</body></html>
